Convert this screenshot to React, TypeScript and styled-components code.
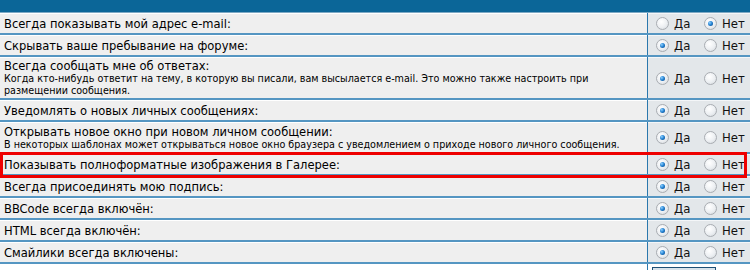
import React from 'react'
import styled, { createGlobalStyle } from 'styled-components'

const GlobalStyle = createGlobalStyle`
  html, body {
    margin: 0;
    padding: 0;
    background: #ffffff;
  }
  body {
    width: 750px;
    height: 270px;
    overflow: hidden;
    font-family: "DejaVu Sans Condensed", "DejaVu Sans", sans-serif;
  }
`

const Page = styled.div`
  position: relative;
  height: 270px;
  overflow: hidden;
`

const Table = styled.div`
  width: 750px;
  display: flex;
  flex-direction: column;
`

const HeaderBar = styled.div`
  height: 12px;
  background: #0b6698;
  border-bottom: 1px solid #7ea9c4;
`

const Row = styled.div<{ $height: number }>`
  display: grid;
  grid-template-columns: 647px 1px 1fr;
  height: ${p => p.$height}px;
  border-bottom: 2px solid #5596c2;
  box-sizing: border-box;
`

const LeftCell = styled.div`
  background: #efefef;
  padding: 0 4px;
  display: flex;
  flex-direction: column;
  justify-content: center;
  border-top: 1px solid #ffffff;
`

const Divider = styled.div`
  background: #2b78ad;
`

const RightCell = styled.div`
  background: #e3e7ea;
  display: flex;
  align-items: center;
  padding-left: 8px;
  border-top: 1px solid #f4f6f8;
`

const Label = styled.div`
  font-size: 12.8px;
  color: #000000;
  line-height: 14px;
  white-space: nowrap;
`

const Desc = styled.div`
  font-family: "DejaVu Sans", sans-serif;
  font-size: 9.6px;
  line-height: 12px;
  color: #000000;
  white-space: nowrap;
`

const Choice = styled.label`
  display: flex;
  align-items: center;
  gap: 5px;
  font-size: 13px;
  color: #111;
  width: 48px;
  & + & {
    width: auto;
  }
`

const Radio = styled.span<{ $on: boolean }>`
  width: 11px;
  height: 11px;
  border-radius: 50%;
  border: 1px solid #a9adb2;
  background: radial-gradient(circle at 40% 35%, #ffffff 0%, #eceff2 55%, #cfd4d9 100%);
  position: relative;
  flex: none;

  &::after {
    content: '';
    display: ${p => (p.$on ? 'block' : 'none')};
    position: absolute;
    left: 3px;
    top: 3px;
    width: 5px;
    height: 5px;
    border-radius: 50%;
    background: radial-gradient(circle at 35% 35%, #8fd0ff 0%, #1f7fd0 50%, #0a3f7a 100%);
  }
`

const Highlight = styled.div`
  position: absolute;
  left: 0;
  top: 152px;
  width: 747px;
  height: 26px;
  border: 3px solid #ee0000;
  box-sizing: border-box;
  pointer-events: none;
`

const FooterRow = styled.div`
  display: grid;
  grid-template-columns: 647px 1px 1fr;
  height: 6px;
  overflow: hidden;
`

const FooterButton = styled.div`
  margin: 3px 0 0 4px;
  width: 62px;
  height: 20px;
  border: 1px solid #1e4f75;
  background: #d9e3ea;
`

type Option = {
  label: string
  desc?: string[]
  yes: boolean
  height: number
}

const options: Option[] = [
  { label: 'Всегда показывать мой адрес e-mail:', yes: false, height: 22 },
  { label: 'Скрывать ваше пребывание на форуме:', yes: true, height: 22 },
  {
    label: 'Всегда сообщать мне об ответах:',
    desc: [
      'Когда кто-нибудь ответит на тему, в которую вы писали, вам высылается e-mail. Это можно также настроить при',
      'размещении сообщения.',
    ],
    yes: true,
    height: 43,
  },
  { label: 'Уведомлять о новых личных сообщениях:', yes: true, height: 22 },
  {
    label: 'Открывать новое окно при новом личном сообщении:',
    desc: ['В некоторых шаблонах может открываться новое окно браузера с уведомлением о приходе нового личного сообщения.'],
    yes: true,
    height: 32,
  },
  { label: 'Показывать полноформатные изображения в Галерее:', yes: true, height: 22 },
  { label: 'Всегда присоединять мою подпись:', yes: true, height: 22 },
  { label: 'BBCode всегда включён:', yes: true, height: 22 },
  { label: 'HTML всегда включён:', yes: true, height: 22 },
  { label: 'Смайлики всегда включены:', yes: true, height: 22 },
]

const App: React.FC = () => {
  return (
    <Page>
      <GlobalStyle />
      <Table>
        <HeaderBar />
        {options.map(opt => (
          <Row key={opt.label} $height={opt.height}>
            <LeftCell>
              <Label>{opt.label}</Label>
              {opt.desc?.map(line => (
                <Desc key={line}>{line}</Desc>
              ))}
            </LeftCell>
            <Divider />
            <RightCell>
              <Choice>
                <Radio $on={opt.yes} />
                Да
              </Choice>
              <Choice>
                <Radio $on={!opt.yes} />
                Нет
              </Choice>
            </RightCell>
          </Row>
        ))}
        <FooterRow>
          <div />
          <Divider />
          <div>
            <FooterButton />
          </div>
        </FooterRow>
      </Table>
      <Highlight />
    </Page>
  )
}

export default App
